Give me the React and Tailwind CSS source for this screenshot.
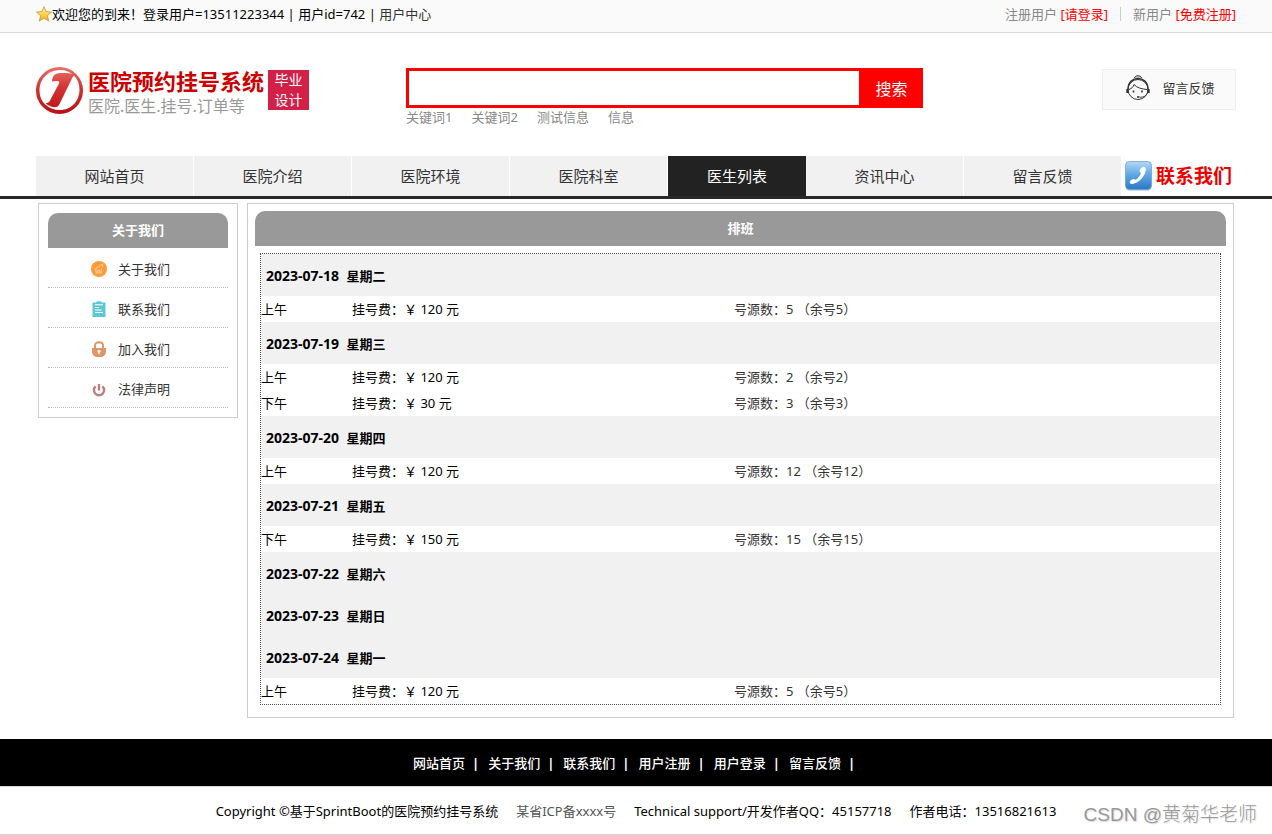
const NAV = [
  { label: "网站首页" },
  { label: "医院介绍" },
  { label: "医院环境" },
  { label: "医院科室" },
  { label: "医生列表", active: true },
  { label: "资讯中心" },
  { label: "留言反馈" },
];

const SCHEDULE = [
  { date: "2023-07-18", day: "星期二", slots: [["上午", 120, 5]] },
  { date: "2023-07-19", day: "星期三", slots: [["上午", 120, 2], ["下午", 30, 3]] },
  { date: "2023-07-20", day: "星期四", slots: [["上午", 120, 12]] },
  { date: "2023-07-21", day: "星期五", slots: [["下午", 150, 15]] },
  { date: "2023-07-22", day: "星期六", slots: [] },
  { date: "2023-07-23", day: "星期日", slots: [] },
  { date: "2023-07-24", day: "星期一", slots: [["上午", 120, 5]] },
];

const FOOTER_LINKS = ["网站首页", "关于我们", "联系我们", "用户注册", "用户登录", "留言反馈"];

function StarIcon() {
  return (
    <svg className="size-4 shrink-0" viewBox="0 0 16 16" aria-hidden="true">
      <defs>
        <linearGradient id="star" x1="0" y1="0" x2="0" y2="1">
          <stop offset="0" stopColor="#fff3a0" />
          <stop offset="0.5" stopColor="#fbd64a" />
          <stop offset="1" stopColor="#f3ab1c" />
        </linearGradient>
      </defs>
      <path
        d="M8 .7l2.1 4.9 5.4.5-4.1 3.5 1.3 5.5L8 12.2l-4.7 2.9 1.3-5.5L.5 6.1l5.4-.5z"
        fill="url(#star)"
        stroke="#c9943a"
        strokeWidth="0.8"
        strokeLinejoin="round"
      />
    </svg>
  );
}

function LogoIcon() {
  return (
    <svg className="size-[47px] shrink-0" viewBox="0 0 47 47" aria-hidden="true">
      <defs>
        <linearGradient id="logo" gradientUnits="userSpaceOnUse" x1="0" y1="0" x2="0" y2="47">
          <stop offset="0" stopColor="#ea6f6a" />
          <stop offset="0.45" stopColor="#d23432" />
          <stop offset="1" stopColor="#b80f14" />
        </linearGradient>
      </defs>
      <path
        fillRule="evenodd"
        fill="url(#logo)"
        d="M23.500 0a23.500 23.500 0 1 0 0 47a23.500 23.500 0 1 0 0-47zM24.500 3c10.500 0 19 8 19 19.500c0 12-8.500 20.500-19.500 20.500c-12 0-20.500-8-20.500-19.500c0-12 9-20.500 21-20.500z"
      />
      <path
        fill="url(#logo)"
        d="M16 14.500c0-4 2-7.500 6-8.200c5-.6 11-.3 17 1.200c-2 1.500-3 3.500-4 6L23.500 37c-1.500 3-3.500 3.800-6.500 3c-3-.6-5.500-2-7.500-4c2 .2 3.500-.5 4.500-2.500L23 16.500c.6-1.500 0-2.300-1.500-2.500c-2-.2-3.800 0-5.500.5z"
      />
    </svg>
  );
}

function AgentIcon() {
  return (
    <svg className="h-[26px] w-6 shrink-0" viewBox="0 0 24 26" fill="none" stroke="#333" aria-hidden="true">
      <path d="M8.500 3c.3-3 6.700-3 7 0" fill="#ccc" strokeWidth="1" />
      <circle cx="12" cy="14.500" r="10" strokeWidth="1" />
      <path d="M2 14C2 0 22 0 22 14" strokeWidth="1.400" />
      <path d="M3 14.500c2.500-1 4.500-2.500 5-5c3 3.500 8 4.500 13 5" strokeWidth="1" />
      <path d="M1.500 14v4M22.500 14v4" strokeWidth="2.400" />
      <path d="M7.500 15.500v2M16 15.500v2" strokeWidth="1.600" />
      <path d="M21.500 18c-1.500 3-3.500 4.300-7.500 4.300" strokeWidth="0.900" />
      <path d="M11 22h2.500" strokeWidth="1.600" />
    </svg>
  );
}

function PhoneIcon() {
  return (
    <svg className="h-[30px] w-[27px] shrink-0" viewBox="0 0 27 30" aria-hidden="true">
      <defs>
        <linearGradient id="phone" x1="0" y1="0" x2="0" y2="1">
          <stop offset="0" stopColor="#b3d8f5" />
          <stop offset="0.45" stopColor="#62aae5" />
          <stop offset="1" stopColor="#2c76c4" />
        </linearGradient>
      </defs>
      <rect x="1" y="2" width="25" height="28" rx="4" fill="#c9d8e8" />
      <rect x="0.500" y="0.500" width="26" height="28" rx="4" fill="url(#phone)" stroke="#6ba2d6" strokeWidth="0.800" />
      <path
        fill="#fff"
        d="M17.500 6c1.500-.8 3.200.2 3.300 2C21 14.500 14 22 7.500 23c-1.800.2-3.300-1-2.700-2.500c.4-1.200 3-3 4.300-2.500l1.200 1c2.700-1.500 4.700-4 5.700-7l-1.300-1.300c-.6-1.200 1.300-4.200 2.800-4.700z"
      />
    </svg>
  );
}

function AboutIcon() {
  return (
    <svg className="size-4" viewBox="0 0 16 16" aria-hidden="true">
      <circle cx="8" cy="8" r="8" fill="#ff9933" />
      <path d="M3.500 8.500l5.500-4M5 8.500v3.300h1.800V9.500h1.700v2.300h2V7M9.500 4l2-.5v3" fill="none" stroke="#ffc58c" strokeWidth="1.300" />
    </svg>
  );
}

function ClipboardIcon() {
  return (
    <svg className="size-4" viewBox="0 0 16 16" aria-hidden="true">
      <path d="M1.500 1.500H5C5.500-.3 10.500-.3 11 1.500h3.500V16h-13z" fill="#5cc8d7" />
      <path d="M4 3.700h8M4 6.500h4M4 9h6.500M4 11.500h8" stroke="#fff" strokeWidth="1.100" />
    </svg>
  );
}

function LockIcon() {
  return (
    <svg className="size-4" viewBox="0 0 16 16" aria-hidden="true">
      <path d="M4 8V4.500C4 .2 12 .2 12 4.500V8" fill="none" stroke="#e09468" strokeWidth="2" />
      <path d="M1 7h14v3.500c0 3-2.500 5.500-5 5.500H6c-2.500 0-5-2.500-5-5.500z" fill="#e09468" />
      <circle cx="8" cy="10.300" r="1.500" fill="#fff" />
      <path d="M8 10v3.300" stroke="#fff" strokeWidth="1.300" />
    </svg>
  );
}

function PowerIcon() {
  return (
    <svg className="size-4" viewBox="0 0 16 16" fill="none" stroke="#bd7f7f" strokeWidth="2.400" aria-hidden="true">
      <path d="M4.600 5.300a5.100 5.100 0 1 0 6.800 0M8 3v6.500" />
    </svg>
  );
}

const SIDE = [
  { label: "关于我们", Icon: AboutIcon },
  { label: "联系我们", Icon: ClipboardIcon },
  { label: "加入我们", Icon: LockIcon },
  { label: "法律声明", Icon: PowerIcon },
];

export default function App() {
  return (
    <div className="relative bg-white font-['Noto_Sans','Noto_Sans_CJK_SC',sans-serif] text-[13px] leading-5 text-black" lang="zh-CN">
      <div className="border-b border-[#d9d9d9] bg-[#fafafa]">
        <div className="mx-auto flex h-8 max-w-[1200px] items-center justify-between pb-[5px]">
          <div className="flex items-center">
            <StarIcon />
            <p>
              欢迎您的到来！登录用户=13511223344 | 用户id=742 | <a href="#user" className="text-[#333]">用户中心</a>
            </p>
          </div>
          <div className="flex items-center gap-3 text-[#888]">
            <span>注册用户 <a href="#login" className="text-[#f00]">[请登录]</a></span>
            <span className="h-[14px] w-px bg-[#ccc]" />
            <span>新用户 <a href="#register" className="text-[#f00]">[免费注册]</a></span>
          </div>
        </div>
      </div>

      <header className="mx-auto flex h-[123px] max-w-[1200px] items-start justify-between pt-[34px]">
        <div className="flex flex-1 items-start">
          <a href="#home" className="flex items-start gap-[5px]">
            <LogoIcon />
            <span className="flex flex-col">
              <span className="text-[22px] leading-7 font-bold text-[#c00]">医院预约挂号系统</span>
              <span className="text-base leading-[22px] text-[#999]">医院.医生.挂号.订单等</span>
            </span>
            <span className="mt-[3px] -ml-px w-[41px] bg-[#d32048] text-center text-sm leading-5 text-white">毕业<br />设计</span>
          </a>
          <div className="ml-auto w-[830px]">
            <form className="mt-px flex h-10 w-[517px] border-[3px] border-[#f00]" onSubmit={(e) => e.preventDefault()}>
              <input type="text" aria-label="搜索" className="min-w-0 flex-1 bg-white px-2 outline-none" />
              <button type="submit" className="w-[61px] bg-[#f00] pt-[2px] pl-1 text-base text-white">搜索</button>
            </form>
            <div className="flex gap-[19px] leading-[18px] text-[#888]">
              {["关键词1", "关键词2", "测试信息", "信息"].map((k) => (
                <a key={k} href="#search">{k}</a>
              ))}
            </div>
          </div>
        </div>
        <a href="#feedback" className="-ml-[134px] mt-[2px] flex h-[41px] w-[134px] items-center justify-center gap-3 border border-[#eee] bg-[#fafafa] pb-1 pl-[3px] text-[#333]">
          <AgentIcon />
          留言反馈
        </a>
      </header>

      <nav className="border-b-[3px] border-[#292929]">
        <div className="mx-auto flex h-10 max-w-[1200px] items-center text-[15px]">
          {NAV.map((n) => (
            <a
              key={n.label}
              href="#nav"
              className={
                n.active
                  ? "flex h-10 w-[138px] items-center justify-center bg-[#222] text-white"
                  : "flex h-10 w-[158px] items-center justify-center border-r border-white bg-[#f1f1f1] text-[#333]"
              }
            >
              {n.label}
            </a>
          ))}
          <a href="#contact" className="ml-[3px] flex items-center gap-1 text-[19px] font-bold text-[#e00]">
            <PhoneIcon />
            联系我们
          </a>
        </div>
      </nav>

      <main className="mx-auto flex max-w-[1200px] items-start gap-[9px] px-[2px] pt-1 pb-[21px]">
        <aside className="w-[200px] shrink-0 border border-[#ccc] p-[9px]">
          <h2 className="rounded-t-[10px] bg-[#999] text-center leading-[35px] font-bold text-white">关于我们</h2>
          <ul>
            {SIDE.map(({ label, Icon }) => (
              <li key={label} className="border-b border-dotted border-[#bbb]">
                <a href="#about" className="flex h-[39px] items-center gap-[11px] pt-[2px] pl-[43px] text-[#333]">
                  <Icon />
                  {label}
                </a>
              </li>
            ))}
          </ul>
        </aside>

        <section className="min-w-0 flex-1 border border-[#ccc] px-[7px] pt-[7px] pb-3">
          <h1 className="rounded-t-[10px] bg-[#999] text-center leading-[35px] font-bold text-white">排班</h1>
          <div className="mx-[5px] mt-[7px] border border-dotted border-[#555]">
            <table className="w-full table-fixed border-collapse text-left">
              <colgroup>
                <col className="w-[91px]" />
                <col className="w-[382px]" />
                <col />
              </colgroup>
              {SCHEDULE.map((d) => (
                <tbody key={d.date}>
                  <tr className="h-[42px] bg-[#f1f1f1]">
                    <th colSpan={3} scope="rowgroup" className="pt-[2px] pb-0 pl-[5px] font-bold">
                      <span className="mr-1 text-sm">{d.date}</span> {d.day}
                    </th>
                  </tr>
                  {d.slots.map(([time, fee, total]) => (
                    <tr key={time} className="h-[26px]">
                      <td className="p-0">{time}</td>
                      <td className="p-0">挂号费：￥ {fee} 元</td>
                      <td className="p-0 text-[#333]">号源数：{total} （余号{total}）</td>
                    </tr>
                  ))}
                </tbody>
              ))}
            </table>
          </div>
        </section>
      </main>

      <footer>
        <div className="flex h-[47px] items-center justify-center gap-[9px] bg-black pr-1 font-medium text-white">
          {FOOTER_LINKS.map((l) => (
            <span key={l} className="flex gap-[7px]">
              <a href="#footer">{l}</a>
              <span className="font-bold">|</span>
            </span>
          ))}
        </div>
        <div className="flex h-[49px] items-center justify-center gap-[18px] border-y border-[#d9d9d9]">
          <span>Copyright ©基于SprintBoot的医院预约挂号系统</span>
          <a href="#icp" className="text-[#555]">某省ICP备xxxx号</a>
          <span>Technical support/开发作者QQ：45157718</span>
          <span>作者电话：13516821613</span>
        </div>
      </footer>
      <div className="absolute right-[15px] bottom-[6px] font-['Liberation_Sans','Noto_Sans_CJK_SC',sans-serif] text-[19px] leading-7 font-light text-[#999] [text-shadow:1px_1px_1px_#ddd]">CSDN @黄菊华老师</div>
    </div>
  );
}
